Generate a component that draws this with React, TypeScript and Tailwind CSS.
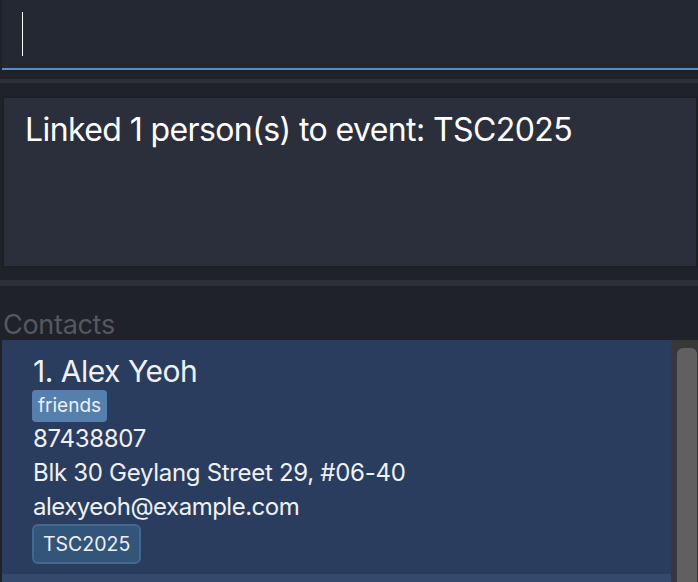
import React from 'react';

const font = { fontFamily: 'Inter, "Noto Sans", sans-serif' };

const App = () => {
  return (
    <div className="w-[698px] h-[582px] overflow-hidden bg-[#1f2229] flex flex-col" style={font}>
      {/* command box */}
      <div className="h-[70px] pl-[2px] bg-[#1f2229]">
        <div className="h-full bg-[#242832] border-b-2 border-[#5b8cc2] flex items-center pl-[20px]">
          <div className="w-px h-[44px] bg-white" />
        </div>
      </div>
      <div className="h-[9px]" />
      <div className="h-[4px] bg-[#2c3039]" />
      <div className="h-[13px]" />

      {/* result box */}
      <div className="h-[172px] pl-[2px]">
        <div className="h-full bg-[#2b2f3b] border-2 border-[#1c1f26] pl-[21px] pt-[12px]">
          <div className="text-[32px] leading-[40px] text-white tracking-[-0.6px]">Linked 1 person(s) to event: TSC2025</div>
        </div>
      </div>
      <div className="h-[12px]" />
      <div className="h-[6px] bg-[#2c3039]" />

      {/* contacts */}
      <div className="flex-1 flex flex-col">
        <div className="h-[54px] flex items-end pl-[3px] pb-[2px]">
          <span className="text-[27px] text-[#55585e] leading-none tracking-[-0.3px]">Contacts</span>
        </div>
        <div className="flex-1 flex min-h-0">
          <div className="flex-1 pl-[2px] flex flex-col">
            <div className="h-[234px] bg-[#2a3d5e] pl-[31px] pt-[14px] flex flex-col items-start text-[#eef1f5]">
              <div className="text-[30px] leading-[34px] tracking-[-0.5px]">1. Alex Yeoh</div>
              <div className="-ml-px mt-[2px] h-[32px] rounded-[4px] bg-[#5580ae] px-[6px] text-[19px] leading-[32px]">friends</div>
              <div className="text-[24px] leading-[34px] tracking-[-0.3px]">87438807</div>
              <div className="text-[24px] leading-[34px] tracking-[-0.3px]">Blk 30 Geylang Street 29, #06-40</div>
              <div className="text-[24px] leading-[34px] tracking-[-0.5px]">alexyeoh@example.com</div>
              <div className="-ml-px rounded-[6px] border-2 border-[#43698e] bg-[#33557a] px-[9px] text-[19.5px] leading-[36px]">TSC2025</div>
            </div>
            <div className="flex-1 bg-[#334a6c]" />
          </div>
          <div className="w-[27px] bg-[#383838] pl-[6px] pt-[8px]">
            <div className="w-[20px] h-full bg-[#606060] rounded-t-[6px]" />
          </div>
        </div>
      </div>
    </div>
  );
};

export default App;
